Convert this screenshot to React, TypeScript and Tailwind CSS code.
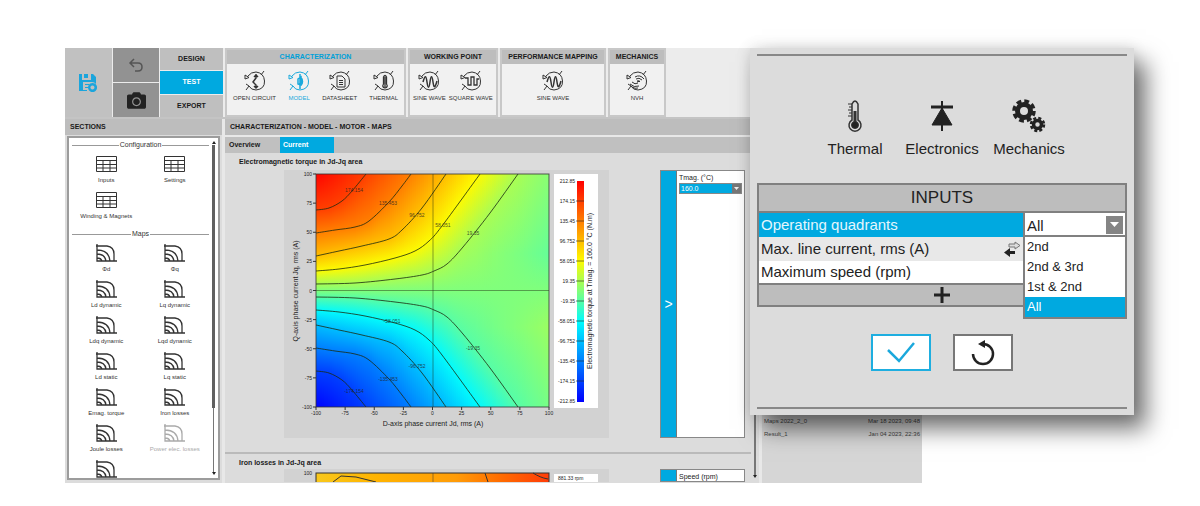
import React from 'react';
import { FaCamera } from 'react-icons/fa';

type Point = [number, number];

interface Contour {
  value: number;
  points: Point[];
  label: Point;
  mirrorLabel: Point;
}

// contour lines of the upper half of the torque map, the lower half is its mirror image
const PLOT = 233;
const MAX_TORQUE = 212.85;
const contours: Contour[] = [
  { value: 174.154, label: [38, 18], mirrorLabel: [38, 219], points: [[0, 36], [13, 34], [26, 27], [36, 17], [50, 0]] },
  { value: 135.453, label: [72, 31], mirrorLabel: [72, 207], points: [[0, 59], [19, 56], [39, 53], [53, 47], [73, 28], [86, 12], [95, 0]] },
  { value: 96.752, label: [101, 43], mirrorLabel: [101, 194], points: [[0, 82], [23, 77], [46, 72], [73, 65], [86, 56], [106, 34], [130, 0]] },
  { value: 58.051, label: [127, 53], mirrorLabel: [76, 149], points: [[0, 97], [23, 95], [49, 91], [79, 84], [99, 77], [113, 67], [126, 52], [164, 0]] },
  { value: 19.35, label: [157, 61], mirrorLabel: [157, 176], points: [[0, 110], [39, 109], [79, 105], [106, 101], [118, 97], [131, 90], [147, 73], [174, 39], [202, 0]] },
];

const topEdge: Point[] = [[0, 212], [50, 174], [95, 135], [130, 97], [164, 58], [202, 19], [233, 4]];

const palette: [number, number[]][] = [
  [0, [0, 0, 255]],
  [0.36, [0, 250, 255]],
  [0.5, [128, 255, 124]],
  [0.64, [255, 250, 0]],
  [1, [255, 0, 0]],
];

const lerp = (points: Point[], x: number) => {
  for (let i = 1; i < points.length; i++) {
    const [x0, y0] = points[i - 1];
    const [x1, y1] = points[i];
    if (x <= x1) return y0 + ((y1 - y0) * (x - x0)) / (x1 - x0);
  }
  return points[points.length - 1][1];
};

const colorOf = (value: number) => {
  const t = Math.min(1, Math.max(0, (value + MAX_TORQUE) / (2 * MAX_TORQUE)));
  const channels = [0, 1, 2].map((c) => Math.round(lerp(palette.map(([p, rgb]) => [p, rgb[c]] as Point), t)));
  return `rgb(${channels.join(',')})`;
};

const stopsAt = (x: number) => {
  const upper: Point[] = [[0, lerp(topEdge, x)]];
  contours.forEach(({ value, points }) => {
    if (x < points[points.length - 1][0]) upper.push([lerp(points, x), value]);
  });
  if (x > 160) {
    const straight = lerp([...upper, [PLOT / 2, 0]], 80);
    upper.push([80, straight - (14 * (x - 160)) / 73]);
  }
  const lower = upper.map(([y, v]) => [PLOT - y, -v] as Point).reverse();
  return [...upper, [PLOT / 2, 0] as Point, ...lower];
};

const smoothPath = (points: Point[]) =>
  points.slice(1).reduce((d, p, i) => {
    const before = points[Math.max(0, i - 1)];
    const from = points[i];
    const after = points[Math.min(points.length - 1, i + 2)];
    const c1 = [from[0] + (p[0] - before[0]) / 6, from[1] + (p[1] - before[1]) / 6];
    const c2 = [p[0] - (after[0] - from[0]) / 6, p[1] - (after[1] - from[1]) / 6];
    return `${d} C${c1} ${c2} ${p}`;
  }, `M${points[0]}`);

const columns = Array.from({ length: 117 }, (_, i) => i * 2);
const ticks = [-100, -75, -50, -25, 0, 25, 50, 75, 100];
const legend = ['212.85', '174.15', '135.45', '96.752', '58.051', '19.35', '-19.35', '-58.051', '-96.752', '-135.45', '-174.15', '-212.85'];

const TorqueMap = () => (
  <svg width="325" height="268" viewBox="0 0 325 268" className="block shrink-0 bg-[#d2d2d2]" fill="#222">
    <defs>
      {columns.map((x) => (
        <linearGradient key={x} id={`col${x}`} gradientUnits="userSpaceOnUse" x1="0" x2="0" y1="0" y2={PLOT}>
          {stopsAt(x + 1).map(([y, v], i) => (
            <stop key={i} offset={y / PLOT} stopColor={colorOf(v)} />
          ))}
        </linearGradient>
      ))}
      <linearGradient id="legend" x1="0" x2="0" y1="1" y2="0">
        {palette.map(([p, rgb]) => (
          <stop key={p} offset={p} stopColor={`rgb(${rgb.join(',')})`} />
        ))}
      </linearGradient>
    </defs>

    <g transform="translate(32 4)">
      <g shapeRendering="crispEdges">
        {columns.map((x) => (
          <rect key={x} x={x} y="0" width={x + 2 > PLOT ? 1 : 2} height={PLOT} fill={`url(#col${x})`} />
        ))}
      </g>
      <g fill="none" stroke="#1c2a10" strokeOpacity="0.8" strokeWidth="1">
        {contours.map(({ value, points }) => (
          <React.Fragment key={value}>
            <path d={smoothPath(points)} />
            <path d={smoothPath(points.map(([x, y]) => [x, PLOT - y] as Point))} />
          </React.Fragment>
        ))}
        <path d="M117 0V233M0 116.500H233" strokeOpacity="0.45" />
        <rect x="0" y="0" width="233" height="233" stroke="#333" />
      </g>
      <g fontSize="5" textAnchor="middle" fillOpacity="0.8">
        {contours.map(({ value, label, mirrorLabel }) => (
          <React.Fragment key={value}>
            <text x={label[0]} y={label[1]}>{value}</text>
            <text x={mirrorLabel[0]} y={mirrorLabel[1]}>{-value}</text>
          </React.Fragment>
        ))}
      </g>
      <g fontSize="5" stroke="none">
        {ticks.map((t) => {
          const pos = ((t + 100) / 200) * PLOT;
          return (
            <React.Fragment key={t}>
              <path d={`M${pos} 233v3M0 ${PLOT - pos}h-3`} stroke="#333" />
              <text x={pos} y="241" textAnchor="middle">{t}</text>
              <text x="-4" y={PLOT - pos + 2} textAnchor="end">{t}</text>
            </React.Fragment>
          );
        })}
      </g>
    </g>

    <text x="149" y="256" fontSize="7" textAnchor="middle">D-axis phase current Jd, rms (A)</text>
    <text transform="translate(14 121) rotate(-90)" fontSize="7" textAnchor="middle">Q-axis phase current Jq, rms (A)</text>

    <rect x="270" y="4" width="44" height="234" fill="#fff" />
    <rect x="293" y="11" width="7" height="221" fill="url(#legend)" />
    {legend.map((text, i) => (
      <React.Fragment key={text}>
        <text x="291" y={13 + i * 20} fontSize="5" textAnchor="end">{text}</text>
        {i > 0 && i < 11 && <path d={`M292 ${11 + i * 20}h8`} stroke="#222" strokeOpacity="0.6" />}
      </React.Fragment>
    ))}
    <text transform="translate(308 121) rotate(-90)" fontSize="7" textAnchor="middle">
      Electromagnetic torque at Tmag. = 160.0 °C (N.m)
    </text>
  </svg>
);

const IronLossMap = () => (
  <svg width="325" height="13" viewBox="0 0 325 13" className="block shrink-0 bg-[#d2d2d2]" fill="#222">
    <defs>
      <linearGradient id="iron">
        <stop offset="0" stopColor="#f8c81c" />
        <stop offset="0.25" stopColor="#ffb400" />
        <stop offset="0.6" stopColor="#ff9c08" />
        <stop offset="0.8" stopColor="#ff6a00" />
        <stop offset="1" stopColor="#ff3c08" />
      </linearGradient>
    </defs>
    <rect x="32" y="4" width="233" height="12" fill="url(#iron)" stroke="#333" />
    <path d="M49 13l8-6 15 1 20 5M201 4l3 9M249 4c5 3 9 5 15 6" fill="none" stroke="#333" />
    <path d="M149 4v9" stroke="#333" strokeOpacity="0.5" />
    <text x="28" y="6" fontSize="5" textAnchor="end">100</text>
    <rect x="270" y="5" width="44" height="8" fill="#fff" />
    <text x="274" y="11" fontSize="5">881.33 rpm</text>
  </svg>
);

const MotorIcon = ({ children }: { children: React.ReactNode }) => (
  <svg width="22" height="22" viewBox="0 0 22 22" fill="none" stroke="currentColor" strokeWidth="1">
    <path d="M4 6q3-4 8-4 8 1 8.500 9t-8.500 9q-5 0-7-4" />
    <path d="M1 5v4l4-1.500zM17 5l3-4M2 20l3-4-3-2" />
    {children}
  </svg>
);

const glyphs: Record<string, React.ReactNode> = {
  open: <path d="M12 4v4l-3 4 3 3v4M10 7l2-2 2 2M10 16l2 2 2-2" strokeWidth="1.500" />,
  model: <path d="M12 4v15M10 9l3-2v8l-3-1zM13 8c2 1 2 6 0 7" strokeWidth="1.500" />,
  sheet: <path d="M8 6h5l3 3v8H8zM10 10.500h4M10 12.500h4M10 14.500h4" />,
  thermal: <path d="M12 7v9M10.500 7q1.500-3 3 0v7q2 3-1.500 4-3.500-1-1.500-4zM12 15v2" strokeWidth="1.300" />,
  sine: <path d="M5 12c2-7 3-7 4 0s2 7 3 0 2-7 3 0 2 6 4-1" strokeWidth="1.500" />,
  square: <path d="M5 8h3v7h3V7h3v8h3V9h2" strokeWidth="1.300" />,
  nvh: <path d="M10 9q3-2 6 1M9 7q5-3 9 2M11 11q2-1 3 1M12 13q-3 2-6-1M13 16q-5 2-9-2M12 18q-3 1-6-1M11 12l3-1" />,
};

interface RibbonGroupProps {
  title: string;
  className: string;
  active?: boolean;
  items: { icon: string; label: string; active?: boolean }[];
}

const RibbonGroup = ({ title, className, active, items }: RibbonGroupProps) => (
  <section className={`shrink-0 border-2 border-[#c8c8c8] bg-[#f1f1f1] ${className}`}>
    <h2 className={`bg-[#bdbdbd] text-center text-[7px] leading-[14px] font-bold whitespace-nowrap ${active ? 'text-[#00a0d8]' : ''}`}>
      {title}
    </h2>
    <div className={`flex pt-[6px] ${items.length > 2 ? 'justify-between px-[6px]' : 'justify-evenly'}`}>
      {items.map((item) => (
        <button
          key={item.label}
          className={`flex flex-col items-center gap-[2px] text-[6px] leading-2 whitespace-nowrap ${item.active ? 'text-[#19a9dc]' : 'text-[#333]'}`}
        >
          <MotorIcon>{glyphs[item.icon]}</MotorIcon>
          {item.label}
        </button>
      ))}
    </div>
  </section>
);

const TableIcon = () => (
  <svg width="21" height="18" viewBox="0 0 21 18" fill="none" stroke="currentColor">
    <path d="M.5 1.500h20v15H.5zM.5 5.500h20M.5 9.500h20M.5 13h20M7 5.500v11M14 5.500v11" />
  </svg>
);

const MapIcon = () => (
  <svg width="21" height="18" viewBox="0 0 21 18" fill="none" stroke="currentColor" strokeWidth="1.300">
    <path d="M1 0v17h20M0 2h11q7 1 7 8v7M1 6q12 0 13 11M1 10q8 0 9 7M1 14q4 0 5 3" />
  </svg>
);

const sections = [
  { title: 'Configuration', Icon: TableIcon, items: ['Inputs', 'Settings', 'Winding & Magnets'] },
  {
    title: 'Maps',
    Icon: MapIcon,
    items: ['Φd', 'Φq', 'Ld dynamic', 'Lq dynamic', 'Ldq dynamic', 'Lqd dynamic', 'Ld static', 'Lq static', 'Emag. torque', 'Iron losses', 'Joule losses', 'Power elec. losses', ''],
  },
];

const Sidebar = () => (
  <aside className="w-[157px] shrink-0 bg-[#dcdcdc]">
    <h2 className="bg-[#bdbdbd] pl-[5px] text-[7px] leading-4 font-bold">SECTIONS</h2>
    <div className="mx-0.5 mt-px mb-[3px] flex h-[344px] overflow-hidden border-2 border-[#9c9c9c] bg-white pl-[3px]">
      <div className="flex-1">
        {sections.map(({ title, Icon, items }) => (
          <div key={title}>
            <h3 className="mt-[3px] mb-[6px] flex items-center gap-px text-[7px] leading-2 text-[#333] before:h-px before:flex-1 before:bg-[#999] after:h-px after:flex-1 after:bg-[#999]">
              {title}
            </h3>
            <div className="grid grid-cols-2">
              {items.map((label) => (
                <button
                  key={label}
                  aria-label={label || 'More'}
                  className={`flex h-9 flex-col items-center gap-[3px] text-[6px] leading-2 whitespace-nowrap ${label === 'Power elec. losses' ? 'text-[#aaa]' : 'text-[#333]'}`}
                >
                  <Icon />
                  {label}
                </button>
              ))}
            </div>
          </div>
        ))}
      </div>
      <div className="flex w-[9px] flex-col items-center py-[3px] text-[#222]">
        <svg width="4" height="3" viewBox="0 0 4 3" fill="currentColor"><path d="M0 3h4L2 0z" /></svg>
        <div className="mt-px h-[263px] w-[3px] bg-[#606060]" />
        <div className="w-px flex-1 bg-[#777]" />
        <svg width="4" height="3" viewBox="0 0 4 3" fill="currentColor"><path d="M0 0h4L2 3z" /></svg>
      </div>
    </div>
  </aside>
);

const Toolbar = () => (
  <header className="flex h-[69px] gap-0.5">
    <div className="flex w-[158px] shrink-0 gap-px">
      <button aria-label="Save" className="grid w-[47px] place-items-center bg-[#c1c1c1] text-[#1ba5dc]">
        <svg width="19" height="20" viewBox="0 0 19 20" fill="currentColor">
          <path d="M0 1h3v6h9V1h2l3 3v7a5 5 0 0 0-4-2H4v8h4v1H0zM5 1h4v4H5zM6 11h4v1H6zM6 14h3v1H6z" />
          <path d="M13.500 10a4.500 4.500 0 1 0 .1 0zm0 2.500a2 2 0 1 1-.1 0z" fillRule="evenodd" />
        </svg>
      </button>
      <div className="grid w-[46px] grid-rows-2 gap-px">
        <button aria-label="Undo" className="grid place-items-center bg-[#929292] text-[#555]">
          <svg width="16" height="15" viewBox="0 0 16 15" fill="none" stroke="currentColor" strokeWidth="1.500">
            <path d="M6 1L2 5l4 4M2 5h8q4 0 4 4t-4 4H7" />
          </svg>
        </button>
        <button aria-label="Screenshot" className="grid place-items-center bg-[#929292] text-[#222]">
          <FaCamera size={19} />
        </button>
      </div>
      <nav className="grid flex-1 grid-rows-3 gap-px text-[7px] font-bold">
        <button className="bg-[#bfbfbf]">DESIGN</button>
        <button className="bg-[#00a9e0] text-white">TEST</button>
        <button className="bg-[#bfbfbf]">EXPORT</button>
      </nav>
    </div>
    <RibbonGroup
      title="CHARACTERIZATION"
      active
      className="w-[181px]"
      items={[
        { icon: 'open', label: 'OPEN CIRCUIT' },
        { icon: 'model', label: 'MODEL', active: true },
        { icon: 'sheet', label: 'DATASHEET' },
        { icon: 'thermal', label: 'THERMAL' },
      ]}
    />
    <RibbonGroup
      title="WORKING POINT"
      className="w-[90px]"
      items={[
        { icon: 'sine', label: 'SINE WAVE' },
        { icon: 'square', label: 'SQUARE WAVE' },
      ]}
    />
    <RibbonGroup title="PERFORMANCE MAPPING" className="w-[106px]" items={[{ icon: 'sine', label: 'SINE WAVE' }]} />
    <RibbonGroup title="MECHANICS" className="w-[58px]" items={[{ icon: 'nvh', label: 'NVH' }]} />
  </header>
);

const ParameterPanel = ({ children, chevron }: { children: React.ReactNode; chevron?: boolean }) => (
  <div className="flex w-[85px] border border-[#888] bg-white">
    <button aria-label="Collapse parameters" className="grid w-4 shrink-0 place-items-center border-r border-[#777] bg-[#00a9e0] text-[14px] leading-4 text-white">
      {chevron && <span>&gt;</span>}
    </button>
    <div className="flex-1 px-0.5 pt-[3px] text-[7px] leading-2">{children}</div>
  </div>
);

const MapsPanel = () => (
  <main className="min-w-0 flex-1 bg-[#dcdcdc]">
    <h2 className="bg-[#bdbdbd] pl-[5px] text-[7px] leading-4 font-bold">CHARACTERIZATION - MODEL - MOTOR - MAPS</h2>
    <div className="flex border-t-2 border-[#e8e8e8] bg-[#c0c0c0] text-[7px] leading-4 font-bold">
      <button className="w-[55px] pl-1 text-left">Overview</button>
      <button className="w-[54px] bg-[#00a9e0] pl-[3px] text-left text-white">Current</button>
    </div>
    <div className="flex">
      <div className="min-w-0 flex-1">
        <h3 className="pt-[5px] pb-1 pl-[14px] text-[7px] leading-2 font-bold">Electromagnetic torque in Jd-Jq area</h3>
        <div className="flex justify-between pr-[6px] pl-[59px]">
          <TorqueMap />
          <ParameterPanel chevron>
            <label htmlFor="tmag">Tmag. (°C)</label>
            <div className="relative mt-px">
              <select id="tmag" className="block h-[11px] w-full appearance-none border border-[#888] bg-[#00a9e0] pl-px text-[7px] leading-2 text-white">
                <option>160.0</option>
              </select>
              <svg width="9" height="9" viewBox="0 0 9 9" className="pointer-events-none absolute top-px right-px bg-[#777]" fill="#eee">
                <path d="M2 3h5L4.500 6z" />
              </svg>
            </div>
          </ParameterPanel>
        </div>
        <div className="mt-[14px] border-t-2 border-[#bababa] pt-[5px]">
          <h3 className="pl-[14px] text-[7px] leading-2 font-bold">Iron losses in Jd-Jq area</h3>
          <div className="mt-0.5 flex h-[13px] justify-between overflow-hidden pr-[6px] pl-[59px]">
            <IronLossMap />
            <ParameterPanel>Speed (rpm)</ParameterPanel>
          </div>
        </div>
      </div>
      <div className="flex w-2 flex-col items-center pt-2 pb-1 text-[#222]">
        <div className="w-0.5 flex-1 bg-[#777]" />
        <svg width="4" height="3" viewBox="0 0 4 3" fill="currentColor"><path d="M0 0h4L2 3z" /></svg>
      </div>
    </div>
  </main>
);

const results = [
  { name: 'Maps 2022_2_0', date: 'Mar 18 2023, 09:48' },
  { name: 'Result_1', date: 'Jan 04 2023, 22:36' },
];

const ResultsPanel = () => (
  <aside className="flex w-[160px] shrink-0 flex-col justify-end bg-[#d6d6d6] px-0.5 pb-[42px] text-[6px] leading-[13px] text-[#444]">
    {results.map((r) => (
      <div key={r.name} className="flex justify-between">
        <span>{r.name}</span>
        <span>{r.date}</span>
      </div>
    ))}
  </aside>
);

const GearsIcon = () => (
  <svg width="34" height="34" viewBox="0 0 34 34" fill="none" stroke="#222">
    <circle cx="12" cy="12" r="6.500" strokeWidth="5" />
    <circle cx="12" cy="12" r="10" strokeWidth="3.500" strokeDasharray="4.800 3.054" />
    <circle cx="25.500" cy="25.500" r="4" strokeWidth="3.500" />
    <circle cx="25.500" cy="25.500" r="6.500" strokeWidth="2.500" strokeDasharray="3 2.105" />
  </svg>
);

const domains = [
  {
    label: 'Thermal',
    icon: (
      <svg width="34" height="34" viewBox="0 0 34 34" fill="none" stroke="#333">
        <path d="M14 21V5q3-6 6 0v16a6 6 0 1 1-6 0z" strokeWidth="1.500" />
        <path d="M10 5h4M11 8h3M10 11h4M11 14h3M10 17h4" />
        <path d="M17 12v12" strokeWidth="3" />
        <circle cx="17" cy="26" r="3.500" fill="#222" />
      </svg>
    ),
  },
  {
    label: 'Electronics',
    icon: (
      <svg width="34" height="34" viewBox="0 0 34 34" fill="#222" stroke="#222">
        <path d="M17 2v30" strokeWidth="2" />
        <path d="M6 8h22" strokeWidth="3" />
        <path d="M17 9l10 17H7z" strokeWidth="1" />
      </svg>
    ),
  },
  { label: 'Mechanics', icon: <GearsIcon /> },
];

const quadrants = ['2nd', '2nd & 3rd', '1st & 2nd', 'All'];

const InputsDialog = () => (
  <div
    role="dialog"
    aria-label="Inputs"
    className="absolute top-0 right-0 w-[384px] bg-[#dcdcdc] px-[7px] py-[6px] shadow-[12px_14px_22px_rgba(0,0,0,0.55),0_0_14px_rgba(0,0,0,0.12)]"
  >
    <div className="border-y-2 border-[#888] pt-[43px] pb-[36px]">
      <div className="flex justify-center gap-3">
        {domains.map((d) => (
          <button key={d.label} className="flex w-[75px] flex-col items-center gap-2 text-[15px] leading-4 text-[#222]">
            {d.icon}
            {d.label}
          </button>
        ))}
      </div>

      <table className="mt-[26px] w-full border-collapse border-2 border-[#808080] text-left text-[15px] leading-6 text-[#222]">
        <thead>
          <tr className="border-b-2 border-[#808080] bg-[#bdbdbd]">
            <th colSpan={2} className="py-px text-center text-[17px] font-normal">INPUTS</th>
          </tr>
        </thead>
        <tbody>
          <tr className="bg-[#00a9e0]">
            <td className="p-0 pl-0.5 text-[#e4f6fd]"><label htmlFor="quadrants">Operating quadrants</label></td>
            <td className="relative w-[102px] border-l-2 border-[#808080] bg-white p-0">
              <select id="quadrants" defaultValue="All" className="block h-[22px] w-full appearance-none bg-white pl-0.5 text-[15px]">
                {quadrants.map((q) => (
                  <option key={q}>{q}</option>
                ))}
              </select>
              <svg width="17" height="18" viewBox="0 0 17 18" className="pointer-events-none absolute top-[3px] right-[2px] bg-[#858585]" fill="#fff">
                <path d="M4 6h9l-4.500 5z" />
              </svg>
              <ul className="absolute top-[22px] -right-0.5 -left-0.5 z-10 border-2 border-[#808080] bg-white text-[13px] leading-5">
                {quadrants.map((q) => (
                  <li key={q} className={`pl-0.5 ${q === 'All' ? 'bg-[#00a9e0] text-white' : ''}`}>{q}</li>
                ))}
              </ul>
            </td>
          </tr>
          <tr className="bg-[#e8e8e8]">
            <td className="p-0 pr-[2px] pl-0.5">
              <div className="flex items-center justify-between">
                Max. line current, rms (A)
                <svg width="18" height="16" viewBox="0 0 18 16">
                  <path d="M6 3h6V1l5 3.500L12 8V6H6z" fill="#ddd" stroke="#777" />
                  <path d="M12 10H7V7l-6 4.500L7 16v-3h5z" fill="#222" />
                </svg>
              </div>
            </td>
            <td className="border-l-2 border-[#808080] bg-white" />
          </tr>
          <tr className="bg-white">
            <td className="p-0 pl-0.5 leading-[22px]">Maximum speed (rpm)</td>
            <td className="border-l-2 border-[#808080]" />
          </tr>
        </tbody>
        <tfoot>
          <tr className="border-t-2 border-[#808080] bg-[#bdbdbd]">
            <td colSpan={2} className="p-0">
              <button aria-label="Add input" className="grid h-5 w-full place-items-center">
                <svg width="16" height="16" viewBox="0 0 16 16" stroke="#222" strokeWidth="3"><path d="M8 0v16M0 8h16" /></svg>
              </button>
            </td>
          </tr>
        </tfoot>
      </table>

      <div className="mt-[27px] flex justify-center gap-[22px]">
        <button aria-label="Apply" className="grid h-[37px] w-[60px] place-items-center border-2 border-[#1eaee0] bg-white">
          <svg width="28" height="22" viewBox="0 0 28 22" fill="none" stroke="#1ba8dc" strokeWidth="2.500"><path d="M1 8l11 11L27 1" /></svg>
        </button>
        <button aria-label="Reset" className="grid h-[37px] w-[60px] place-items-center border-2 border-[#777] bg-white">
          <svg width="26" height="26" viewBox="0 0 26 26" fill="none" stroke="#222" strokeWidth="2.500">
            <path d="M3 14a10 10 0 1 0 10-10" />
            <path d="M8 4l7-4v8z" fill="#222" stroke="none" />
          </svg>
        </button>
      </div>
    </div>
  </div>
);

export default function App() {
  return (
    <div className="bg-white px-[66px] pt-12 pb-6 font-['Liberation_Sans',Arial,sans-serif] text-[#1a1a1a]">
      <div className="relative -ml-px">
        <div className="mr-[212px] bg-[#ececec]">
          <Toolbar />
          <div className="flex gap-[3px] border-t-2 border-[#c4c4c4] bg-[#e8e8e8]">
            <Sidebar />
            <MapsPanel />
            <ResultsPanel />
          </div>
        </div>
        <InputsDialog />
      </div>
    </div>
  );
}
